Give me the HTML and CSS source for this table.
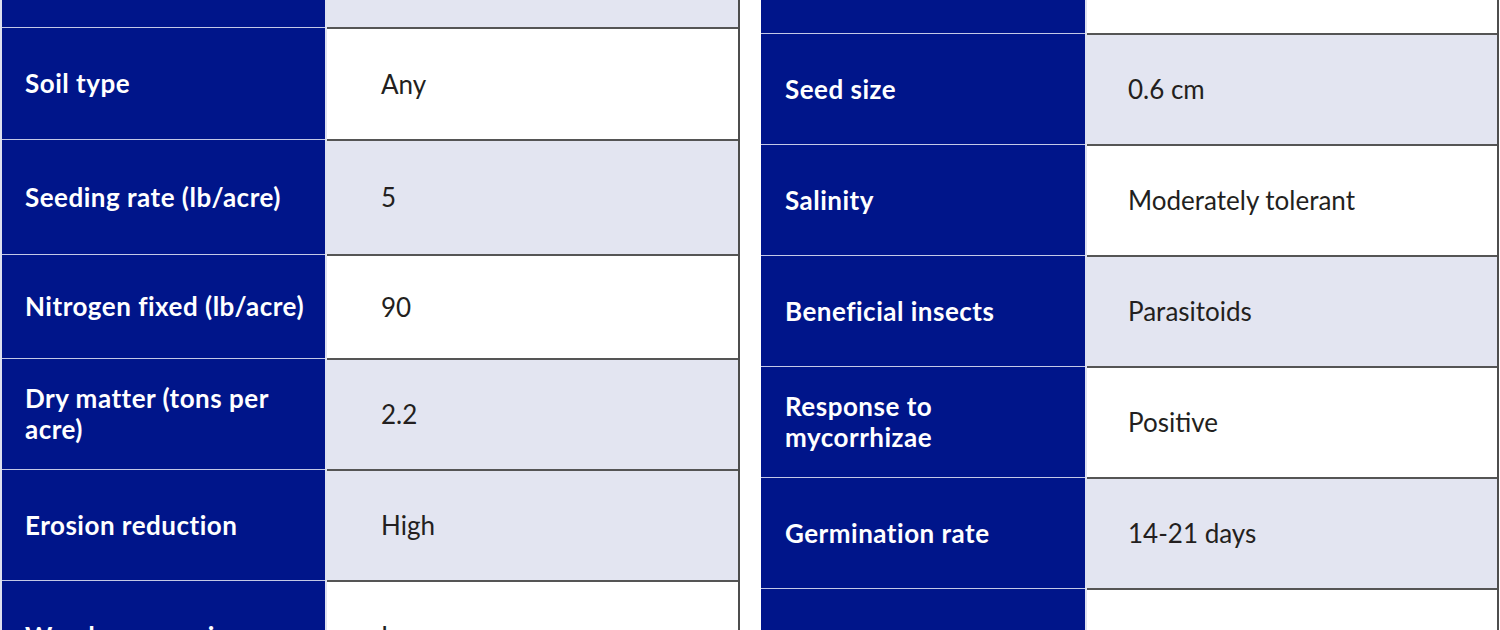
FILE: index.html
```html
<!DOCTYPE html>
<html lang="en">
<head>
<meta charset="utf-8">
<title>Cover crop characteristics</title>
<link rel="stylesheet" href="styles.css">
</head>
<body>
<div class="page">
  <div class="table table-left">
    <div class="th first"></div><div class="td light first"></div>
    <div class="th">Soil type</div><div class="td">Any</div>
    <div class="th">Seeding rate (lb/acre)</div><div class="td light">5</div>
    <div class="th">Nitrogen fixed (lb/acre)</div><div class="td">90</div>
    <div class="th">Dry matter (tons per acre)</div><div class="td light">2.2</div>
    <div class="th">Erosion reduction</div><div class="td light">High</div>
    <div class="th">Weed suppression</div><div class="td">Low</div>
  </div>
  <div class="table table-right">
    <div class="th first"></div><div class="td first"></div>
    <div class="th">Seed size</div><div class="td light">0.6 cm</div>
    <div class="th">Salinity</div><div class="td">Moderately tolerant</div>
    <div class="th">Beneficial insects</div><div class="td light">Parasitoids</div>
    <div class="th">Response to mycorrhizae</div><div class="td">Positive</div>
    <div class="th">Germination rate</div><div class="td light">14-21 days</div>
    <div class="th">Drought tolerance</div><div class="td">Moderate</div>
  </div>
</div>
</body>
</html>
```
FILE: styles.css
```css
html, body {
  margin: 0;
  padding: 0;
  background: #ffffff;
}
body {
  width: 1500px;
  height: 630px;
  overflow: hidden;
}
.page {
  display: flex;
  align-items: flex-start;
  gap: 21px;
}
.table {
  display: grid;
  column-gap: 2px;
  background: #dfe2f0;
  border-right: 2px solid #4d4d4d;
}
.table-left {
  grid-template-columns: 323px 411px;
  grid-template-rows: 27px 112px 115px 104px 111px 111px 111px;
  border-left: 2px solid #dde0ef;
}
.table-right {
  grid-template-columns: 324px 410px;
  grid-template-rows: 33px 111px 111px 111px 111px 111px 111px;
}
.th, .td {
  box-sizing: border-box;
  display: flex;
  align-items: center;
  font-size: 26px;
  line-height: 31px;
}
.th {
  background: #00158a;
  color: #ffffff;
  font-family: "Lato", "Open Sans", sans-serif;
  font-weight: 700;
  letter-spacing: 0.5px;
  padding: 0 12px 0 23px;
  border-top: 1px solid #c3c8e6;
}
.td {
  background: #ffffff;
  color: #231f20;
  font-family: "Lato", "Open Sans", sans-serif;
  font-weight: 400;
  border-top: 2px solid #555555;
}
.table-left .td { padding-left: 54px; }
.table-right .td { padding-left: 41px; }
.table-right .th { padding-left: 24px; }
.td.light { background: #e3e5f1; }
.th.first, .td.first { border-top: 0; }
```
